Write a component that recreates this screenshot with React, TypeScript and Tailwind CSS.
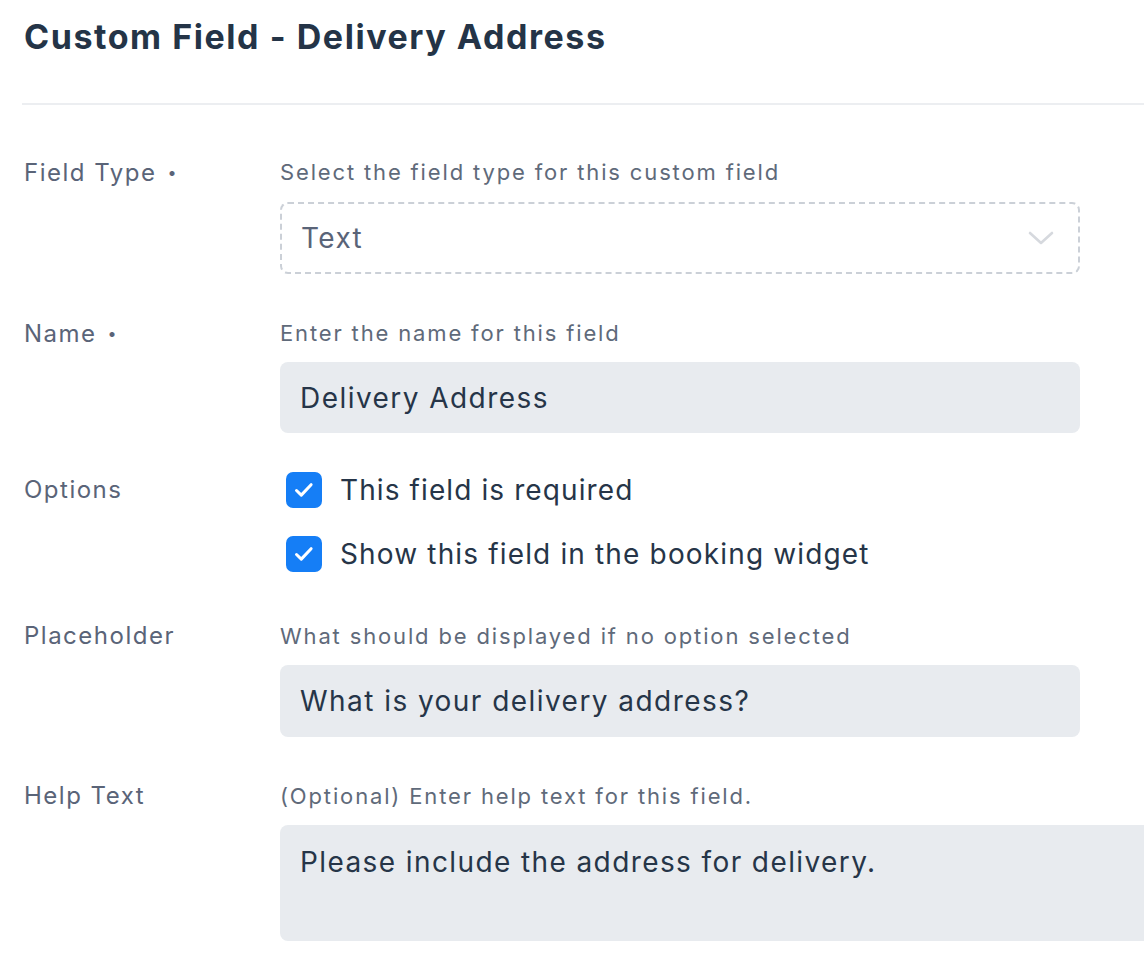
function Check() {
  return (
    <span className="flex h-[36px] w-[36px] items-center justify-center rounded-[7px] bg-[#157ef6]">
      <svg width="24" height="24" viewBox="0 0 24 24" fill="none">
        <path d="M4.5 12.5l4.8 4.6 9.8-10.4" stroke="white" strokeWidth="3" strokeLinecap="round" strokeLinejoin="round" />
      </svg>
    </span>
  );
}

function Row({ label, required, help, children }: { label: string; required?: boolean; help: string; children: React.ReactNode }) {
  return (
    <div className="grid grid-cols-[256px_1fr] pl-6">
      <div className="text-[24px] leading-[30px] tracking-[1.5px] text-[#5a6478]">
        {label}
        {required && <span className="ml-[11px] text-[16px] align-[3px]">•</span>}
      </div>
      <div>
        <p className="text-[22px] leading-[30px] tracking-[1.85px] text-[#5f6a7a]">{help}</p>
        {children}
      </div>
    </div>
  );
}

export default function App() {
  return (
    <div className="h-[968px] w-[1144px] overflow-hidden bg-white font-['Inter',sans-serif]">
      <h1 className="pl-6 pt-[17px] text-[34px] font-bold leading-[40px] tracking-[1.55px] text-[#243447]">
        Custom Field - Delivery Address
      </h1>
      <div className="ml-[22px] mt-[46px] h-[2px] bg-[#eceef1]" />

      <div className="pt-[52px]">
        <Row label="Field Type" required help="Select the field type for this custom field">
          <div className="mt-[15px] flex h-[72px] w-[800px] items-center justify-between rounded-[8px] border-2 border-dashed border-[#cbd0d7] pl-[19px] pr-[24px]">
            <span className="text-[28px] tracking-[1.4px] text-[#5a6478]">Text</span>
            <svg width="26" height="16" viewBox="0 0 26 16" fill="none">
              <path d="M2 3l11 10 11-10" stroke="#d6d9de" strokeWidth="2.6" strokeLinecap="round" strokeLinejoin="round" />
            </svg>
          </div>
        </Row>

        <div className="mt-[44px]">
          <Row label="Name" required help="Enter the name for this field">
            <div className="mt-[14px] flex h-[71px] w-[800px] items-center rounded-[8px] bg-[#e8ebef] px-5 text-[28px] tracking-[1.45px] text-[#263548]">
              Delivery Address
            </div>
          </Row>
        </div>

        <div className="mt-[37px] grid grid-cols-[256px_1fr] pl-6">
          <div className="text-[24px] leading-[40px] tracking-[1.5px] text-[#5a6478]">Options</div>
          <div className="flex flex-col gap-6 pl-[6px]">
            <label className="flex h-[40px] items-center gap-[18px] text-[28px] tracking-[1.1px] text-[#263548]">
              <Check />
              This field is required
            </label>
            <label className="flex h-[40px] items-center gap-[18px] text-[28px] tracking-[1.15px] text-[#263548]">
              <Check />
              Show this field in the booking widget
            </label>
          </div>
        </div>

        <div className="mt-[47px]">
          <Row label="Placeholder" help="What should be displayed if no option selected">
            <div className="mt-[14px] flex h-[72px] w-[800px] items-center rounded-[8px] bg-[#e8ebef] px-5 text-[28px] tracking-[1.45px] text-[#263548]">
              What is your delivery address?
            </div>
          </Row>
        </div>

        <div className="mt-[44px]">
          <Row label="Help Text" help="(Optional) Enter help text for this field.">
            <div className="mt-[14px] h-[116px] w-[900px] rounded-[8px] bg-[#e8ebef] px-5 pt-[20px] text-[28px] leading-[34px] tracking-[1.4px] text-[#263548]">
              Please include the address for delivery.
            </div>
          </Row>
        </div>
      </div>
    </div>
  );
}
